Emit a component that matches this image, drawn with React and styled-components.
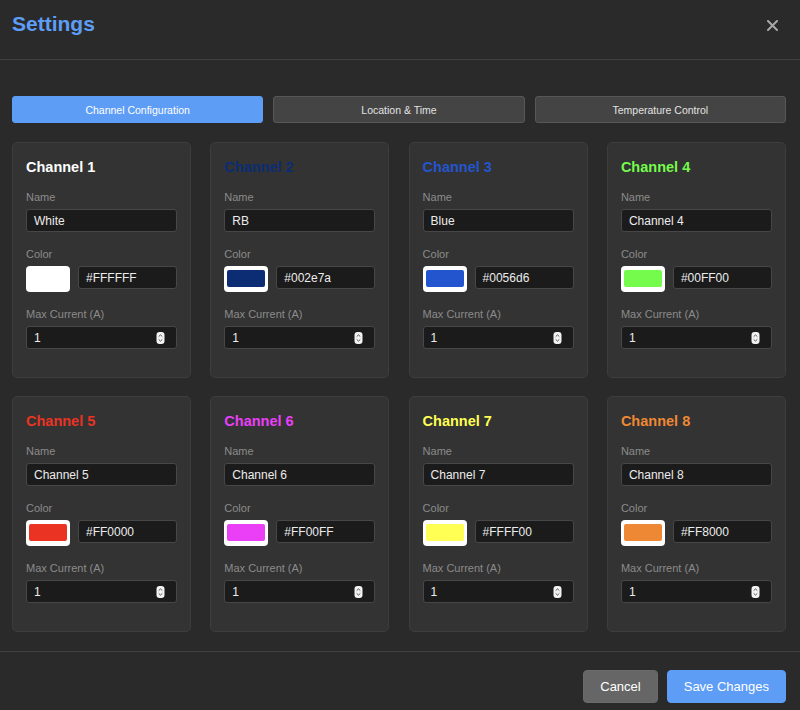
import React from "react";
import styled, { createGlobalStyle } from "styled-components";

const Global = createGlobalStyle`
  html, body { margin: 0; padding: 0; background: #2a2a2a; }
  body { font-family: "Liberation Sans", Arial, sans-serif; }
  * { box-sizing: border-box; }
`;

const Page = styled.div`
  width: 800px;
  background: #2a2a2a;
  color: #e6e6e6;
`;

const Header = styled.header`
  height: 60px;
  border-bottom: 1px solid #404040;
  display: flex;
  justify-content: space-between;
  align-items: flex-start;
  padding: 11px 18px 0 12px;
`;

const Title = styled.h1`
  margin: 0;
  font-size: 21px;
  line-height: 26px;
  font-weight: 700;
  color: #5e9df5;
`;

const CloseButton = styled.button`
  width: 20px;
  height: 20px;
  margin-top: 4px;
  padding: 0;
  border: none;
  background: transparent;
  display: flex;
  align-items: center;
  justify-content: center;
  cursor: pointer;
`;

const Content = styled.main`
  padding: 36px 14px 19px 12px;
`;

const Tabs = styled.div`
  display: grid;
  grid-template-columns: repeat(3, 1fr);
  gap: 10px;
  margin-bottom: 19px;
`;

const Tab = styled.button`
  height: 27px;
  border-radius: 3px;
  border: 1px solid ${(p) => (p.$active ? "#5e9df5" : "#575757")};
  background: ${(p) => (p.$active ? "#5e9df5" : "#444444")};
  color: ${(p) => (p.$active ? "#ffffff" : "#e2e2e2")};
  font-family: "Liberation Sans", Arial, sans-serif;
  font-size: 10.5px;
  padding: 0;
  cursor: pointer;
`;

const Grid = styled.div`
  display: grid;
  grid-template-columns: repeat(4, 1fr);
  gap: 18px 19.2px;
`;

const Card = styled.section`
  background: #333333;
  border: 1px solid #3d3d3d;
  border-radius: 5px;
  padding: 13px 13px 28px;
  display: flex;
  flex-direction: column;
`;

const CardTitle = styled.h2`
  margin: 0 0 12px;
  font-size: 14.5px;
  line-height: 22px;
  font-weight: 700;
  color: ${(p) => p.$color};
`;

const Fields = styled.div`
  display: flex;
  flex-direction: column;
  gap: 15px;
`;

const Field = styled.div`
  display: flex;
  flex-direction: column;
`;

const Label = styled.label`
  font-size: 11px;
  line-height: 14px;
  color: #8b8b8b;
  margin-bottom: 5px;
`;

const InputBox = styled.div`
  height: 23px;
  flex: ${(p) => (p.$grow ? "1 1 0" : "none")};
  min-width: 0;
  background: #1b1b1b;
  border: 1px solid #474747;
  border-radius: 3px;
  padding: 0 11px 0 7px;
  display: flex;
  align-items: center;
  font-size: 12px;
  color: #ececec;
`;

const InputText = styled.span`
  flex: 1;
  white-space: nowrap;
`;

const ColorRow = styled.div`
  display: flex;
  align-items: flex-start;
  gap: 8px;
`;

const Swatch = styled.div`
  width: 44px;
  height: 26px;
  flex: none;
  background: #ffffff;
  border-radius: 4px;
  padding: 4px 3px 5px;
  display: flex;
`;

const SwatchFill = styled.div`
  flex: 1;
  border-radius: 2px;
  background: ${(p) => p.$color};
`;

const Spinner = () => (
  <svg width="9" height="12" viewBox="0 0 9 12">
    <rect x="0.5" y="0" width="8" height="12" rx="3" fill="#f2f2f2" />
    <path d="M2.7 4.6 L4.5 2.9 L6.3 4.6" fill="none" stroke="#555" strokeWidth="1" />
    <path d="M2.7 7.4 L4.5 9.1 L6.3 7.4" fill="none" stroke="#555" strokeWidth="1" />
  </svg>
);

const Footer = styled.footer`
  border-top: 1px solid #404040;
  padding: 18px 14px 7px;
  display: flex;
  justify-content: flex-end;
  gap: 9px;
`;

const Button = styled.button`
  height: 33px;
  padding: 0 ${(p) => (p.$primary ? "16px" : "16px")};
  border-radius: 4px;
  border: 1px solid ${(p) => (p.$primary ? "#5e9df5" : "#6a6a6a")};
  background: ${(p) => (p.$primary ? "#5e9df5" : "#666666")};
  color: #ffffff;
  font-family: "Liberation Sans", Arial, sans-serif;
  font-size: 13px;
  cursor: pointer;
`;

const channels = [
  { n: 1, name: "White", hex: "#FFFFFF", show: "#ffffff" },
  { n: 2, name: "RB", hex: "#002e7a", show: "#0c2d74" },
  { n: 3, name: "Blue", hex: "#0056d6", show: "#2355cf" },
  { n: 4, name: "Channel 4", hex: "#00FF00", show: "#75fb4c" },
  { n: 5, name: "Channel 5", hex: "#FF0000", show: "#ea3323" },
  { n: 6, name: "Channel 6", hex: "#FF00FF", show: "#ea3ff7" },
  { n: 7, name: "Channel 7", hex: "#FFFF00", show: "#ffff54" },
  { n: 8, name: "Channel 8", hex: "#FF8000", show: "#ef8834" },
];

export default function App() {
  return (
    <Page>
      <Global />
      <Header>
        <Title>Settings</Title>
        <CloseButton aria-label="Close">
          <svg width="11" height="11" viewBox="0 0 11 11">
            <path d="M1 1 L10 10 M10 1 L1 10" stroke="#a8a8a8" strokeWidth="2" strokeLinecap="round" />
          </svg>
        </CloseButton>
      </Header>
      <Content>
        <Tabs>
          <Tab $active>Channel Configuration</Tab>
          <Tab>Location &amp; Time</Tab>
          <Tab>Temperature Control</Tab>
        </Tabs>
        <Grid>
          {channels.map((c) => (
            <Card key={c.n}>
              <CardTitle $color={c.show}>Channel {c.n}</CardTitle>
              <Fields>
                <Field>
                  <Label>Name</Label>
                  <InputBox>
                    <InputText>{c.name}</InputText>
                  </InputBox>
                </Field>
                <Field>
                  <Label>Color</Label>
                  <ColorRow>
                    <Swatch>
                      <SwatchFill $color={c.show} />
                    </Swatch>
                    <InputBox $grow>
                      <InputText>{c.hex}</InputText>
                    </InputBox>
                  </ColorRow>
                </Field>
                <Field>
                  <Label>Max Current (A)</Label>
                  <InputBox>
                    <InputText>1</InputText>
                    <Spinner />
                  </InputBox>
                </Field>
              </Fields>
            </Card>
          ))}
        </Grid>
      </Content>
      <Footer>
        <Button>Cancel</Button>
        <Button $primary>Save Changes</Button>
      </Footer>
    </Page>
  );
}
